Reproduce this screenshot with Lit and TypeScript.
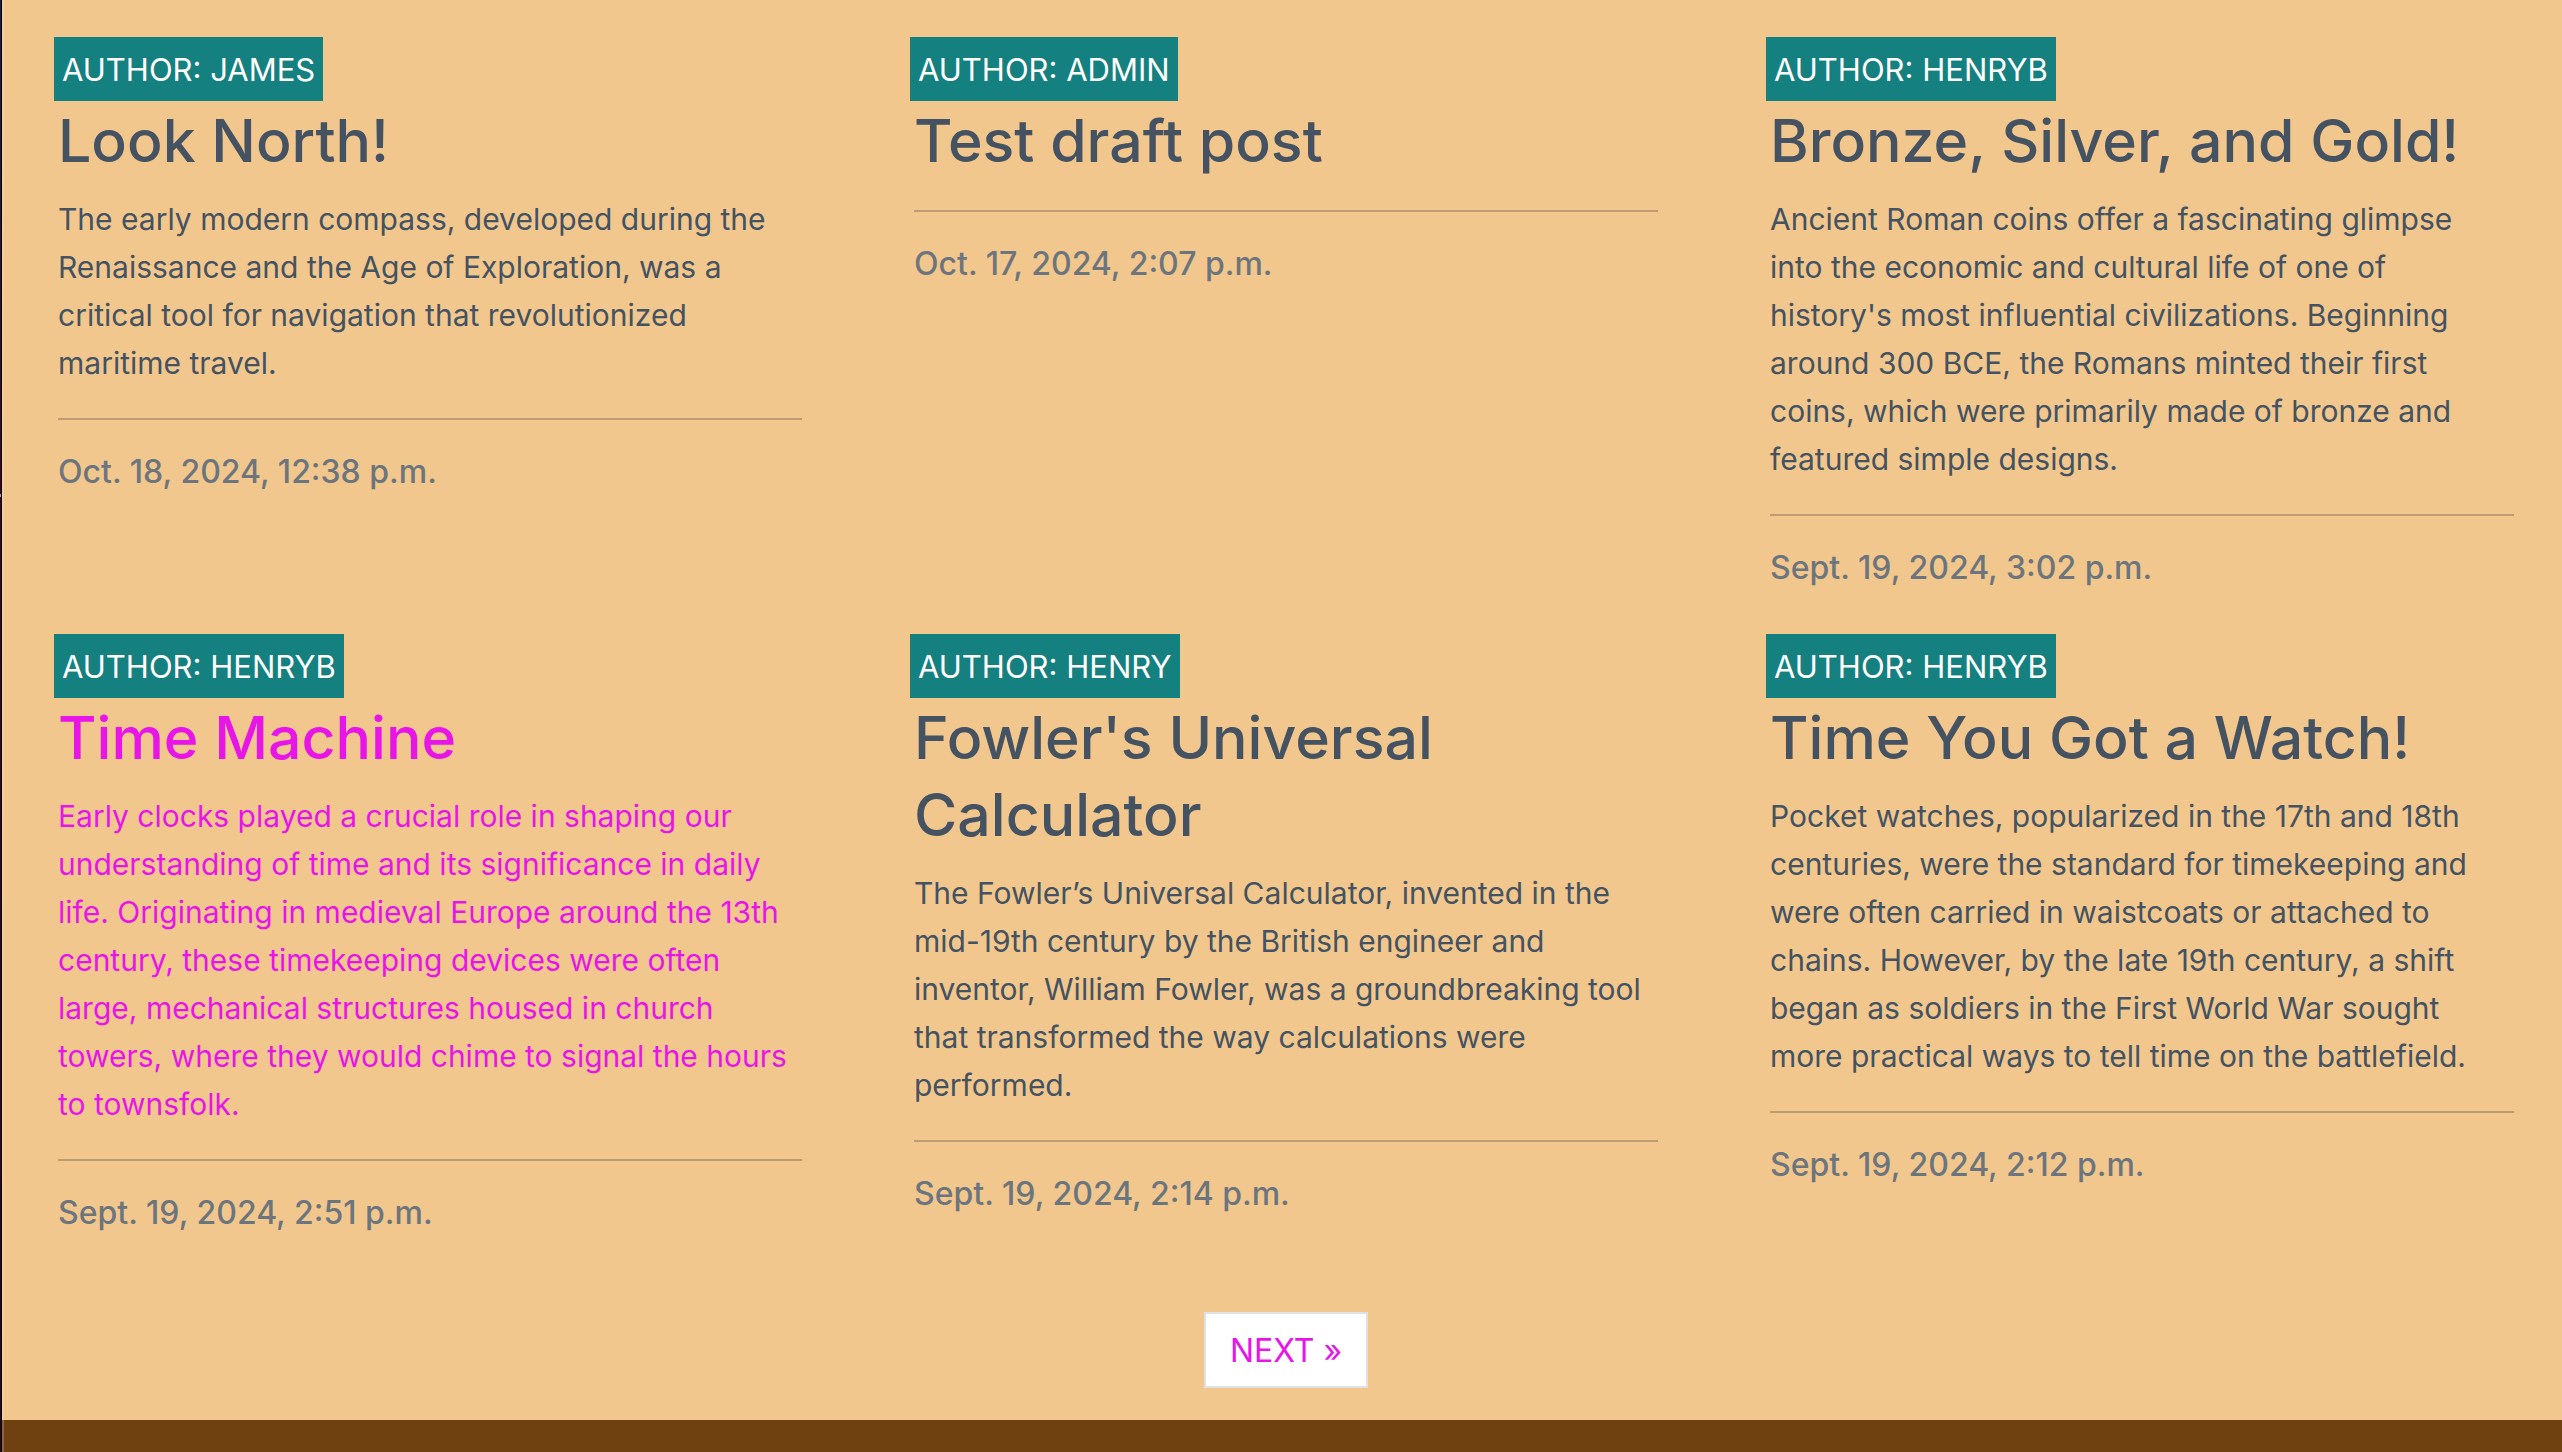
import { LitElement, html, css } from "lit";
import { customElement, property } from "lit/decorators.js";
import { classMap } from "lit/directives/class-map.js";

interface Post {
  author: string;
  title: string;
  excerpt: string;
  date: string;
  active?: boolean;
}

const POSTS: Post[] = [
  {
    author: "JAMES",
    title: "Look North!",
    excerpt:
      "The early modern compass, developed during the Renaissance and the Age of Exploration, was a critical tool for navigation that revolutionized maritime travel.",
    date: "Oct. 18, 2024, 12:38 p.m.",
  },
  { author: "ADMIN", title: "Test draft post", excerpt: "", date: "Oct. 17, 2024, 2:07 p.m." },
  {
    author: "HENRYB",
    title: "Bronze, Silver, and Gold!",
    excerpt:
      "Ancient Roman coins offer a fascinating glimpse into the economic and cultural life of one of history's most influential civilizations. Beginning around 300 BCE, the Romans minted their first coins, which were primarily made of bronze and featured simple designs.",
    date: "Sept. 19, 2024, 3:02 p.m.",
  },
  {
    author: "HENRYB",
    title: "Time Machine",
    excerpt:
      "Early clocks played a crucial role in shaping our understanding of time and its significance in daily life. Originating in medieval Europe around the 13th century, these timekeeping devices were often large, mechanical structures housed in church towers, where they would chime to signal the hours to townsfolk.",
    date: "Sept. 19, 2024, 2:51 p.m.",
    active: true,
  },
  {
    author: "HENRY",
    title: "Fowler's Universal Calculator",
    excerpt:
      "The Fowler’s Universal Calculator, invented in the mid-19th century by the British engineer and inventor, William Fowler, was a groundbreaking tool that transformed the way calculations were performed.",
    date: "Sept. 19, 2024, 2:14 p.m.",
  },
  {
    author: "HENRYB",
    title: "Time You Got a Watch!",
    excerpt:
      "Pocket watches, popularized in the 17th and 18th centuries, were the standard for timekeeping and were often carried in waistcoats or attached to chains. However, by the late 19th century, a shift began as soldiers in the First World War sought more practical ways to tell time on the battlefield.",
    date: "Sept. 19, 2024, 2:12 p.m.",
  },
];

@customElement("post-card")
export class PostCard extends LitElement {
  @property({ attribute: false }) post!: Post;

  static styles = css`
    :host {
      display: block;
      min-width: 0;
    }
    .author {
      width: fit-content;
      margin: 0 0 1px -4px;
      padding: 9px 8px 7px;
      background: #158080;
      color: #fff;
      font-size: 31px;
      line-height: 48px;
    }
    .link {
      display: block;
      color: #445261;
      text-decoration: none;
    }
    .active {
      color: #e815e8;
    }
    .title {
      margin: 0;
      font-size: 59px;
      font-weight: 500;
      line-height: 77px;
    }
    .excerpt {
      margin: 16px 0 0;
      padding-right: 8px;
      font-size: 30px;
      line-height: 48px;
    }
    .rule {
      height: 2px;
      margin: 31px 0 32px;
      border: 0;
      background: #bd9e74;
    }
    .date {
      margin: 0;
      color: #6c757d;
      font-weight: 500;
      line-height: 39px;
    }
  `;

  render() {
    const { author, title, excerpt, date, active } = this.post;
    return html`
      <article>
        <p class="author">AUTHOR: ${author}</p>
        <a class=${classMap({ link: true, active: !!active })} href="#post">
          <h2 class="title">${title}</h2>
          ${excerpt ? html`<p class="excerpt">${excerpt}</p>` : null}
        </a>
        <hr class="rule" />
        <p class="date">${date}</p>
      </article>
    `;
  }
}

@customElement("app-root")
export class AppRoot extends LitElement {
  static styles = css`
    :host {
      display: flex;
      min-height: 100vh;
      background: #f1c78d;
      font-family: Inter, "Liberation Sans", sans-serif;
      font-size: 32px;
    }
    .edge {
      flex: none;
      width: 1px;
      border-right: 1px solid #000;
      background:
        linear-gradient(#a0a0a0, #a0a0a0) 0 494px / 1px 3px no-repeat,
        linear-gradient(#1c1c50, #4a0018 35%, #30001a);
    }
    .page {
      flex: 1;
      min-width: 0;
      display: flex;
      flex-direction: column;
    }
    .main {
      padding: 37px 48px 32px 54px;
      border-left: 2px solid #f4cf9c;
    }
    .posts {
      display: grid;
      grid-template-columns: repeat(3, minmax(0, 1fr));
      column-gap: 112px;
      row-gap: 47px;
    }
    .pages {
      display: flex;
      justify-content: center;
      margin-top: 80px;
    }
    .next {
      padding: 13px 24px 11px;
      border: 2px solid #dee2e6;
      background: #fff;
      color: #e815e8;
      line-height: 48px;
      text-decoration: none;
    }
    .footer {
      flex: 1;
      min-height: 32px;
      border-left: 2px solid #8b673e;
      background: #6f4110;
    }
  `;

  render() {
    return html`
      <div class="edge"></div>
      <div class="page">
        <main class="main">
          <section class="posts">
            ${POSTS.map((post) => html`<post-card .post=${post}></post-card>`)}
          </section>
          <nav class="pages" aria-label="Pages">
            <a class="next" href="#next">NEXT »</a>
          </nav>
        </main>
        <footer class="footer"></footer>
      </div>
    `;
  }
}
